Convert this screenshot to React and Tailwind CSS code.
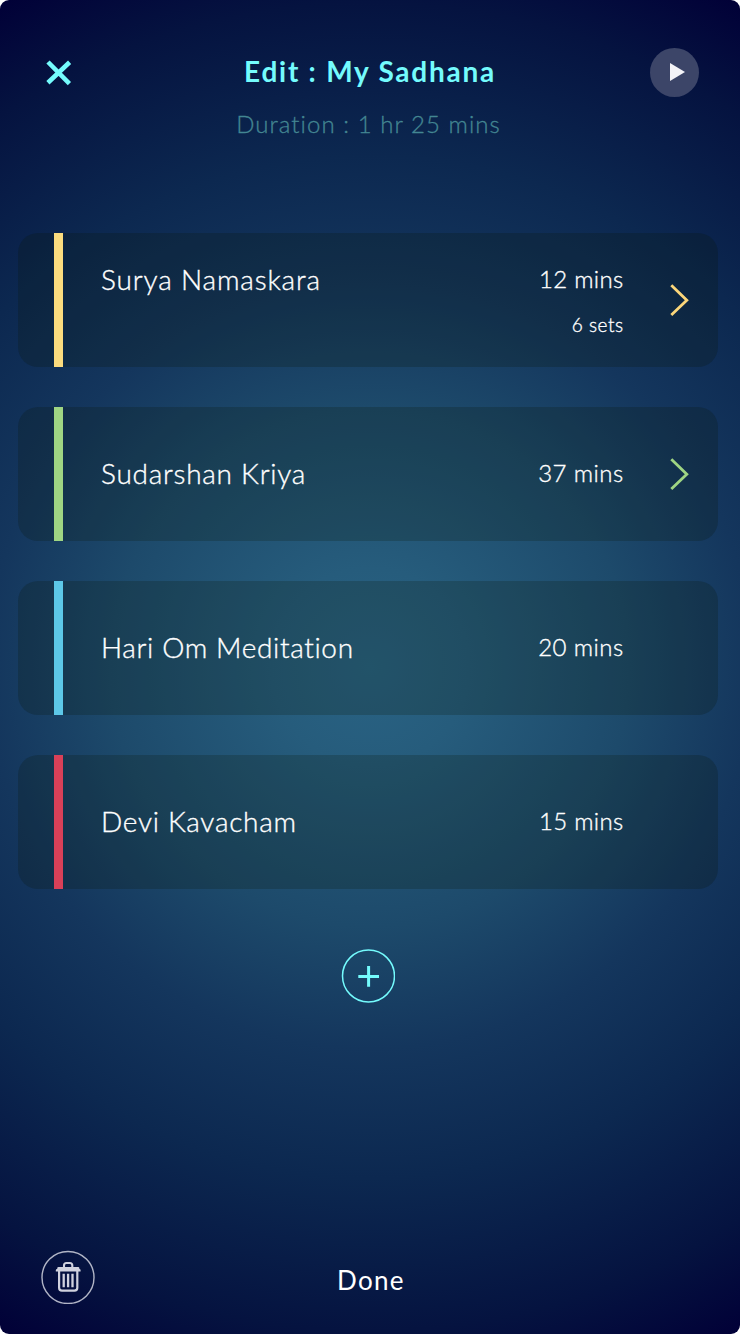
import React from "react";

const items = [
  { name: "Surya Namaskara", mins: "12 mins", sets: "6 sets", bar: "bg-[#fbdc7e]", arrow: "text-[#fbd67a]", track: "tracking-[0.85px]", minsTrack: "tracking-[0.3px]" },
  { name: "Sudarshan Kriya", mins: "37 mins", bar: "bg-[#9fd583]", arrow: "text-[#9fd583]", track: "tracking-[0.75px]", minsTrack: "tracking-[0.4px]" },
  { name: "Hari Om Meditation", mins: "20 mins", bar: "bg-[#5dc8e8]", track: "tracking-[0.65px]", minsTrack: "tracking-[0.4px]" },
  { name: "Devi Kavacham", mins: "15 mins", bar: "bg-[#d94058]", track: "tracking-[0.73px]", minsTrack: "tracking-[0.3px]" },
];

function Chevron({ className }) {
  return (
    <svg className={className} width="20" height="34" viewBox="0 0 20 34" fill="none" stroke="currentColor" strokeWidth="2.8">
      <path d="M1.3 2.3 16.8 17.2 1.3 32.1" />
    </svg>
  );
}

function Card({ item }) {
  return (
    <li className="flex h-[134px] rounded-[20px] bg-[rgba(10,20,0,0.2)] pl-9">
      <div className={`w-[9px] shrink-0 ${item.bar}`} />
      <div className={`flex grow justify-between pl-[38px] text-white [-webkit-text-stroke:0.35px] ${item.sets ? "pt-[28px]" : "pt-[48px]"}`}>
        <span className={`text-[28px] leading-9 font-light ${item.track}`}>{item.name}</span>
        <div className="flex flex-col items-end">
          <span className={`text-[24px] leading-9 font-light ${item.minsTrack}`}>{item.mins}</span>
          {item.sets && <span className="mt-4 text-[19px] leading-6 font-light tracking-[0.5px]">{item.sets}</span>}
        </div>
      </div>
      <div className="flex w-[94.5px] shrink-0 items-center pl-[46.5px]">
        {item.arrow && <Chevron className={item.arrow} />}
      </div>
    </li>
  );
}

export default function App() {
  return (
    <div className="h-[1334px] w-[740px] bg-white">
      <main className="flex h-full flex-col overflow-hidden rounded-[9px] bg-[radial-gradient(circle_763px_at_370px_667px,#296384_0%,#265c7c_13%,#1d4a6b_34%,#14365d_50%,#0c2850_67%,#051340_87%,#010037_100%)] font-['Lato',sans-serif]">
        <header className="grid h-[233px] grid-cols-[100px_1fr_100px] px-[18px]">
          <button className="mt-[59px] ml-[27px] h-7 w-7 text-[#74fbfd]" aria-label="Close">
            <svg width="28" height="28" viewBox="0 0 28 28" fill="none" stroke="currentColor" strokeWidth="4.6">
              <path d="M3 3 24.4 24.6M24.6 3.3 2.9 23.7" />
            </svg>
          </button>
          <div className="flex flex-col items-center pt-[53px]">
            <h1 className="text-[28px] leading-9 font-bold tracking-[1.75px] whitespace-nowrap text-[#74fbfd]">Edit : My Sadhana</h1>
            <p className="mt-[17px] mr-[3px] text-[24px] leading-9 font-light tracking-[1.05px] whitespace-nowrap text-[#438692] [-webkit-text-stroke:0.3px]">Duration : 1 hr 25 mins</p>
          </div>
          <button className="mt-[47.5px] ml-[27.5px] flex h-[49.5px] w-[49.5px] items-center justify-center rounded-full bg-[#3c4568]" aria-label="Play">
            <svg className="ml-[7px]" width="15" height="18" viewBox="0 0 15 18" fill="#f4f4f8">
              <path d="M0 0 15 9 0 18Z" />
            </svg>
          </button>
        </header>
        <ul className="mr-[22px] ml-[18px] flex flex-col gap-10">
          {items.map((item) => (
            <Card key={item.name} item={item} />
          ))}
        </ul>
        <button className="mt-[60px] ml-[341px] h-[54px] w-[54px] text-[#74fbfd]" aria-label="Add">
          <svg width="54" height="54" viewBox="0 0 54 54" fill="none" stroke="currentColor">
            <circle cx="27.5" cy="27" r="26" strokeWidth="1.5" />
            <path d="M17.3 27.5H38M27.6 17V37.8" strokeWidth="3" />
          </svg>
        </button>
        <footer className="mt-auto flex h-[84px] pl-[41px]">
          <button className="h-[54px] w-[54px] text-[#d0d2de]" aria-label="Delete">
            <svg width="54" height="54" viewBox="0 0 54 54" fill="none" stroke="currentColor">
              <circle cx="27" cy="27.5" r="26" strokeWidth="1.4" opacity=".85" />
              <path d="M23 18V15.5Q23 13 25.5 13H28.8Q31.3 13 31.3 15.5V18" strokeWidth="2.1" />
              <path d="M14.8 21.6H39.6V20.2Q39.6 19 38.4 19V18.4Q38.4 17 37 17H17.6Q16.2 17 16.2 18.4V19Q14.8 19 14.8 20.2Z" fill="currentColor" stroke="none" />
              <path d="M18.1 20V37.8Q18.1 40.7 21 40.7H33.4Q36.3 40.7 36.3 37.8V20" strokeWidth="2.2" />
              <path d="M22.7 23.8V37.2M27.1 23.8V37.2M31.5 23.8V37.2" strokeWidth="2.3" />
            </svg>
          </button>
          <button className="mt-[12px] ml-[242px] h-9 text-[26px] leading-9 tracking-[1.3px] text-white">Done</button>
        </footer>
      </main>
    </div>
  );
}
